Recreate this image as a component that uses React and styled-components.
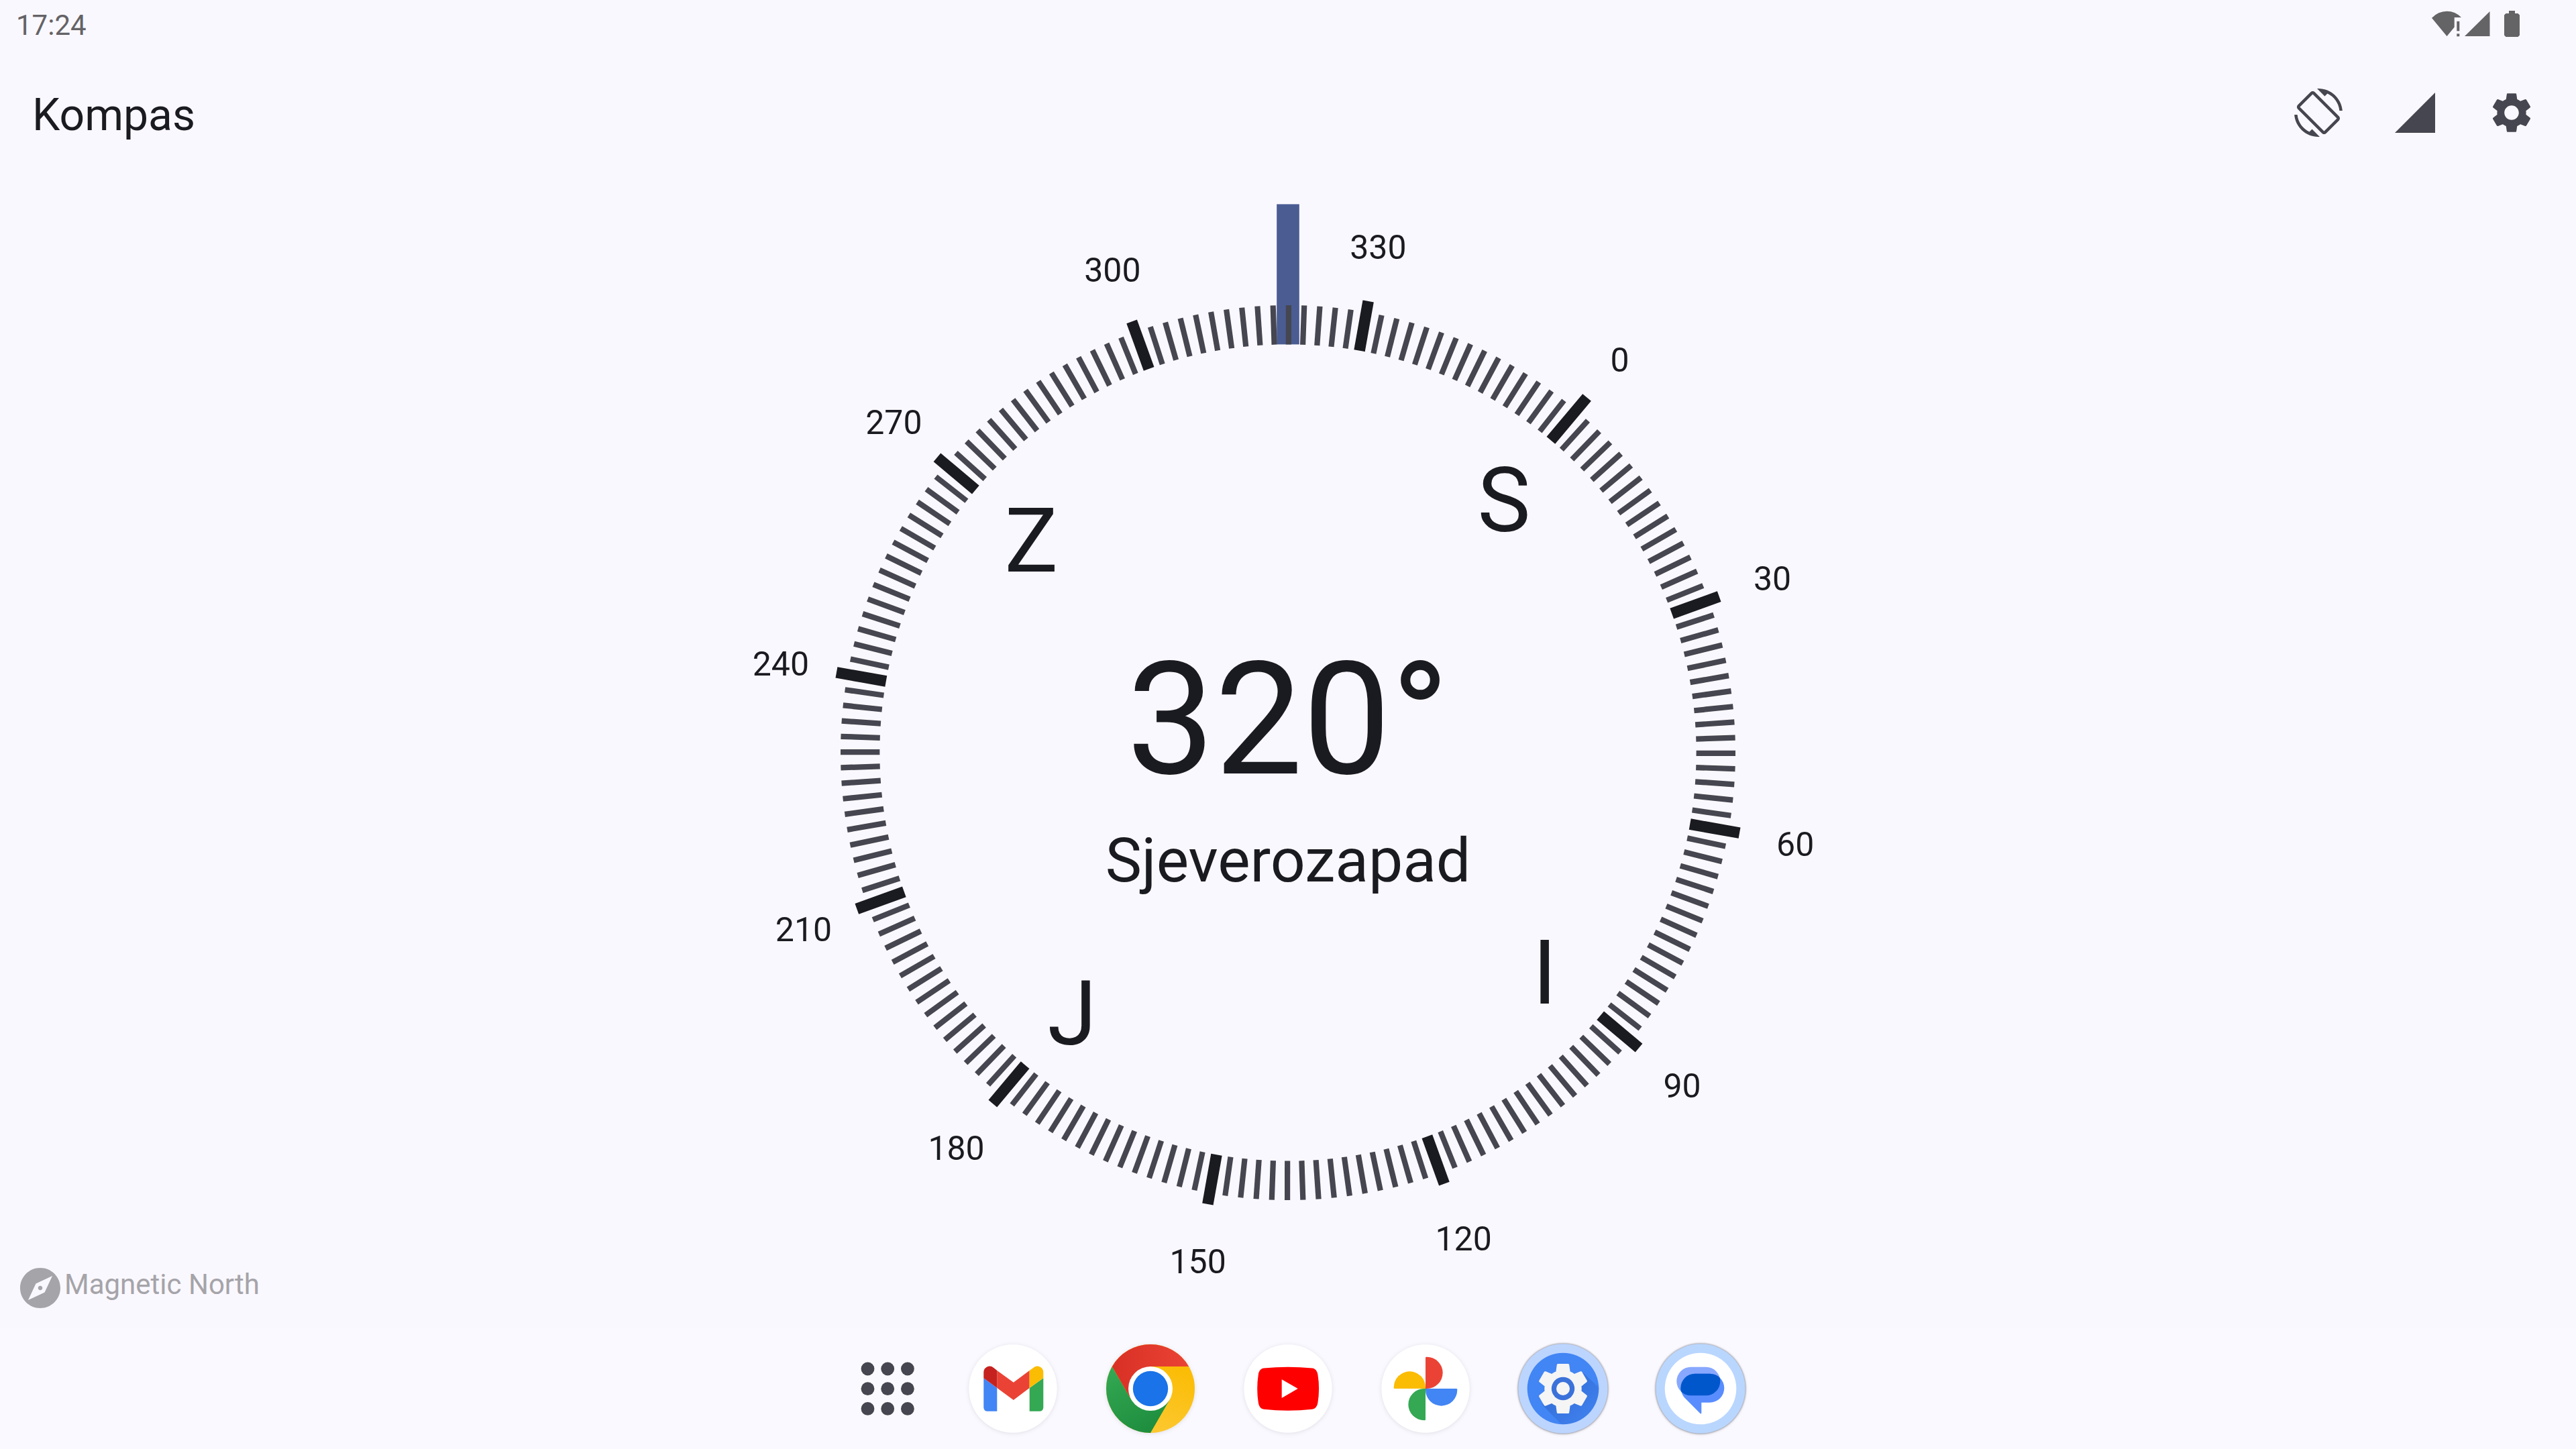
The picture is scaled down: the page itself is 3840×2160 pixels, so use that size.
import React from "react";
import styled, { createGlobalStyle } from "styled-components";

const color = {
  surface: "#faf8ff",
  dock: "#faf9ff",
  ink: "#1a1b20",
  variant: "#45464f",
  primary: "#4a5c92",
  status: "#646366",
  hint: "#a5a4a9",
};

const GlobalStyle = createGlobalStyle`
  body {
    margin: 0;
    background: ${color.surface};
    font-family: Roboto, "Noto Sans", sans-serif;
  }
`;

const Screen = styled.div`
  display: flex;
  flex-direction: column;
  width: 3840px;
  height: 2160px;
  overflow: hidden;
  background: ${color.surface};
  color: ${color.ink};
`;

const StatusBar = styled.header`
  display: flex;
  justify-content: space-between;
  align-items: flex-start;
  height: 72px;
  box-sizing: border-box;
  padding: 14px 80px 0 24px;
  color: ${color.status};
`;

const Clock = styled.span`
  font-size: 42px;
  line-height: 48px;
`;

const Toolbar = styled.div`
  display: flex;
  justify-content: space-between;
  align-items: center;
  height: 192px;
  box-sizing: border-box;
  padding: 0 60px 0 48px;
`;

const Title = styled.h1`
  margin: 0;
  padding-top: 7px;
  font-size: 66px;
  font-weight: 400;
  line-height: 80px;
`;

const Actions = styled.div`
  display: flex;
  gap: 72px;
  color: ${color.variant};
`;

const Glyph = styled.svg`
  display: block;
  width: 72px;
  height: 72px;
  fill: currentColor;
`;

const Stage = styled.main`
  display: grid;
  height: 1716px;
  & > * {
    grid-area: 1 / 1;
  }
`;

const Dial = styled.svg`
  display: block;
  width: 1716px;
  height: 1716px;
  justify-self: center;
`;

const DialText = styled.text`
  font-size: ${(p) => p.$size}px;
  fill: ${color.ink};
  text-anchor: middle;
`;

const Readout = styled.div`
  display: flex;
  flex-direction: column;
  align-items: center;
  align-self: center;
  justify-self: center;
  gap: 36px;
  padding-top: 46px;
`;

const Degrees = styled.div`
  font-size: 233.5px;
  line-height: 240px;
`;

const Direction = styled.div`
  font-size: 91.3px;
  line-height: 108px;
`;

const NorthHint = styled.div`
  display: flex;
  align-items: center;
  align-self: end;
  justify-self: start;
  padding: 0 0 24px 24px;
  color: ${color.hint};
`;

const HintText = styled.span`
  padding-bottom: 10px;
  font-size: 42px;
  line-height: 50px;
`;

const Dock = styled.nav`
  display: flex;
  align-items: center;
  justify-content: flex-start;
  height: 180px;
  box-sizing: border-box;
  padding: 0 0 1px 1283px;
  background: ${color.dock};
`;

const DrawerIcon = styled.svg`
  display: block;
  width: 80px;
  height: 80px;
  margin-right: 80px;
  fill: ${color.variant};
`;

const Apps = styled.div`
  display: flex;
  gap: 71px;
`;

const AppIcon = styled.svg`
  display: block;
  width: 134px;
  height: 134px;
  border-radius: 50%;
  overflow: visible;
  filter: ${(p) =>
    p.$raised
      ? "drop-shadow(0 0 1.5px rgba(0, 0, 0, 0.55)) drop-shadow(0 1px 2px rgba(0, 0, 0, 0.12))"
      : "drop-shadow(0 1px 3px rgba(0, 0, 0, 0.1))"};
`;

const AZIMUTH = 319.92;
const ROSE = [
  ["S", 0],
  ["I", 90],
  ["J", 180],
  ["Z", 270],
];

const polar = (deg, r) => {
  const a = ((deg - AZIMUTH) * Math.PI) / 180;
  return [r * Math.sin(a), -r * Math.cos(a)];
};

const tickEnd = (deg) => {
  if (deg === 0) return 692;
  return deg % 30 === 0 ? 683.6 : 667;
};

function CompassDial() {
  const ticks = Array.from({ length: 180 }, (_, i) => i * 2);
  const labels = ticks.filter((d) => d % 30 === 0);
  return (
    <Dial viewBox="-858 -858 1716 1716">
      <rect x="-16.8" y="-817.6" width="33.6" height="209" fill={color.primary} />
      {ticks.map((d) => {
        const major = d % 30 === 0;
        const [x1, y1] = polar(d, 608.6);
        const [x2, y2] = polar(d, tickEnd(d));
        return (
          <line
            key={d}
            x1={x1}
            y1={y1}
            x2={x2}
            y2={y2}
            stroke={major ? color.ink : color.variant}
            strokeWidth={major ? 16.6 : 8.2}
          />
        );
      })}
      {labels.map((d) => {
        const [x, y] = polar(d, 768);
        return (
          <DialText key={d} $size={50} x={x} y={y + 19.8}>
            {d}
          </DialText>
        );
      })}
      {ROSE.map(([name, d]) => {
        const [x, y] = polar(d, 500);
        return (
          <DialText key={name} $size={133} x={x} y={y + 52.4}>
            {name}
          </DialText>
        );
      })}
    </Dial>
  );
}

const GEAR_OUTER =
  "M19.14,12.94c0.04-0.3,0.06-0.61,0.06-0.94c0-0.32-0.02-0.64-0.07-0.94l2.03-1.58c0.18-0.14,0.23-0.41,0.12-0.61l-1.92-3.32c-0.12-0.22-0.37-0.29-0.59-0.22l-2.39,0.96c-0.5-0.38-1.03-0.7-1.62-0.94L14.4,2.81c-0.04-0.24-0.24-0.41-0.48-0.41h-3.84c-0.24,0-0.43,0.17-0.47,0.41L9.25,5.35C8.66,5.59,8.12,5.92,7.63,6.29L5.24,5.33c-0.22-0.08-0.47,0-0.59,0.22L2.74,8.87C2.62,9.08,2.66,9.34,2.86,9.48l2.03,1.58C4.84,11.36,4.8,11.69,4.8,12s0.02,0.64,0.07,0.94l-2.03,1.58c-0.18,0.14-0.23,0.41-0.12,0.61l1.92,3.32c0.12,0.22,0.37,0.29,0.59,0.22l2.39-0.96c0.5,0.38,1.03,0.7,1.62,0.94l0.36,2.54c0.05,0.24,0.24,0.41,0.48,0.41h3.84c0.24,0,0.44-0.17,0.47-0.41l0.36-2.54c0.59-0.24,1.13-0.56,1.62-0.94l2.39,0.96c0.22,0.08,0.47,0,0.59-0.22l1.92-3.32c0.12-0.22,0.07-0.47-0.12-0.61L19.14,12.94z";
const GEAR_HOLE =
  "M12,15.6c-1.98,0-3.6-1.62-3.6-3.6s1.62-3.6,3.6-3.6s3.6,1.62,3.6,3.6S13.98,15.6,12,15.6z";

const StatusGlyphs = styled.svg`
  display: block;
  width: 138px;
  height: 44px;
  fill: currentColor;
`;

function StatusIcons() {
  return (
    <StatusGlyphs viewBox="3622 14 138 44">
      <path d="M3647.5 54 L3625 26.8 Q3634.5 16.8 3647.5 16.8 Q3660 16.8 3669 26 H3658.7 V40.5 Z" />
      <path d="M3662.3 31.7h4v14.6h-4zM3662.3 50.3h4v4h-4z" />
      <path d="M3674 54H3711.5V17z" />
      <path d="M3740 16h9v4h4.5l2.5 2.5v30l-2.5 2.5h-18l-2.5-2.5v-30l2.5-2.5h4.5z" />
    </StatusGlyphs>
  );
}

const Gmail = () => (
  <AppIcon viewBox="-67 -67 134 134">
    <circle r="65.7" fill="#fff" />
    <path d="M-43.7-15.7L-23.7-1V33.7H-37.7q-6 0-6-6z" fill="#4285f4" />
    <path d="M45.3-15.7L24.7-1V33.7H39.3q6 0 6-6z" fill="#34a853" />
    <path d="M-23.7-27L.8-9.3 24.7-27V-1L.8 17-23.7-1z" fill="#ea4335" />
    <path d="M-43.7-24.3a9 9 0 0 1 14.7-7L-23.7-27V-1L-43.7-15.7z" fill="#c5221f" />
    <path d="M45.3-24.3a9 9 0 0 0-14.7-7L24.7-27V-1L45.3-15.7z" fill="#fbbc04" />
  </AppIcon>
);

const Chrome = () => (
  <AppIcon viewBox="-67 -67 134 134">
    <defs>
      <linearGradient id="cr" x1="0" x2="1">
        <stop offset="0" stopColor="#d93025" />
        <stop offset="1" stopColor="#ea4335" />
      </linearGradient>
      <linearGradient id="cg" x1="0.6" y1="1" x2="0.1" y2="0">
        <stop offset="0" stopColor="#1e8e3e" />
        <stop offset="1" stopColor="#34a853" />
      </linearGradient>
      <linearGradient id="cy" x1="0.4" y1="1" x2="0.7" y2="0.2">
        <stop offset="0" stopColor="#fcc934" />
        <stop offset="1" stopColor="#fbbc04" />
      </linearGradient>
    </defs>
    <circle r="66" fill="url(#cy)" />
    <path d="M-57.16-33A66 66 0 0 0 0 66L28.58 16.5H-28.58z" fill="url(#cg)" />
    <path d="M-57.16-33A66 66 0 0 1 57.16-33H0L-28.58 16.5z" fill="url(#cr)" />
    <circle r="33" fill="#fff" />
    <circle r="26.2" fill="#1a73e8" />
  </AppIcon>
);

const YouTube = () => (
  <AppIcon viewBox="-67 -67 134 134">
    <circle r="65.7" fill="#fff" />
    <path
      d="M-36-30.4Q0-34.2 36-30.4C41-29.8 43.6-26 44.4-21Q47.8 0 44.4 21C43.6 26 41 30 36 30.8Q0 34.6-36 30.8C-41 30-43.4 26-44.2 21Q-47.4 0-44.2-21C-43.4-26-41-29.8-36-30.4z"
      fill="#f00"
    />
    <path d="M-9.3-13.7L14.7.1-9.3 14z" fill="#fff" />
  </AppIcon>
);

const Photos = () => (
  <AppIcon viewBox="-67 -67 134 134">
    <circle r="65.7" fill="#fff" />
    {["#ea4335", "#4285f4", "#34a853", "#fbbc04"].map((c, i) => (
      <path
        key={c}
        d="M0-46q0-1.3 1.3-1.3H2A23.65 23.65 0 0 1 2 0H0z"
        fill={c}
        transform={`rotate(${i * 90})`}
      />
    ))}
  </AppIcon>
);

const SettingsApp = () => (
  <AppIcon $raised viewBox="-67 -67 134 134">
    <defs>
      <linearGradient id="ls" x1="0.3" y1="0.3" x2="0.85" y2="0.85">
        <stop offset="0" stopColor="#1f4fae" stopOpacity="0.35" />
        <stop offset="1" stopColor="#1f4fae" stopOpacity="0" />
      </linearGradient>
      <clipPath id="disc">
        <circle r="53.3" />
      </clipPath>
    </defs>
    <circle r="66.7" fill="#bcd5ff" />
    <circle r="53.3" fill="#4285f4" />
    <path
      clipPath="url(#disc)"
      d="M29.5-24L70 14V70H14L-31 24z"
      fill="url(#ls)"
    />
    <g fill="#f5f5f5">
      <path d={GEAR_OUTER} transform="scale(3.85) translate(-12 -12)" />
      <circle r="17.2" fill="#3b72da" />
      <circle r="10" />
    </g>
  </AppIcon>
);

const Messages = () => (
  <AppIcon $raised viewBox="-67 -67 134 134">
    <defs>
      <clipPath id="bubble">
        <rect x="-35.7" y="-32.3" width="65" height="42.6" rx="21.3" />
      </clipPath>
    </defs>
    <circle r="66.7" fill="#b9d6ff" />
    <circle r="53.3" fill="#fff" />
    <rect x="-35.7" y="-32.3" width="65" height="42.6" rx="21.3" fill="#88a8ff" />
    <path
      d="M-8.2-22.3H13.8a21.5 21.5 0 0 1 0 43H1.3V36.2Q1 38.2-.8 36.8L-23.4 14A21.5 21.5 0 0 1-8.2-22.3z"
      fill="#598dff"
    />
    <rect
      clipPath="url(#bubble)"
      x="-29.7"
      y="-22.3"
      width="65"
      height="43"
      rx="21.5"
      fill="#0057cc"
    />
  </AppIcon>
);

function AllApps() {
  const at = [10.5, 40.2, 69.9];
  return (
    <DrawerIcon viewBox="0 0 80 80">
      {at.map((y) => at.map((x) => <circle key={x + "-" + y} cx={x} cy={y} r="9.9" />))}
    </DrawerIcon>
  );
}

export default function App() {
  return (
    <Screen>
      <GlobalStyle />
      <StatusBar>
        <Clock>17:24</Clock>
        <StatusIcons />
      </StatusBar>
      <Toolbar>
        <Title>Kompas</Title>
        <Actions>
          <Glyph viewBox="0 0 24 24">
            <path d="M16.48 2.52c3.27 1.55 5.61 4.72 5.97 8.48h1.5C23.44 4.84 18.29 0 12 0l-.66.03 3.81 3.81 1.33-1.32zm-6.25-.77c-.59-.59-1.54-.59-2.12 0L1.75 8.11c-.59.59-.59 1.54 0 2.12l12.02 12.02c.59.59 1.54.59 2.12 0l6.36-6.36c.59-.59.59-1.54 0-2.12L10.23 1.75zm4.6 19.44L2.81 9.17l6.36-6.36 12.02 12.02-6.36 6.36zm-7.31.29C4.25 19.94 1.91 16.76 1.55 13H.05C.56 19.16 5.71 24 12 24l.66-.03-3.81-3.81-1.33 1.32z" />
          </Glyph>
          <Glyph viewBox="0 0 24 24">
            <path d="M2 22h20V2z" />
          </Glyph>
          <Glyph viewBox="0 0 24 24">
            <path d={GEAR_OUTER + GEAR_HOLE} />
          </Glyph>
        </Actions>
      </Toolbar>
      <Stage>
        <CompassDial />
        <Readout>
          <Degrees>320°</Degrees>
          <Direction>Sjeverozapad</Direction>
        </Readout>
        <NorthHint>
          <Glyph viewBox="0 0 24 24">
            <path d="M12 10.9c-.61 0-1.1.49-1.1 1.1s.49 1.1 1.1 1.1c.61 0 1.1-.49 1.1-1.1s-.49-1.1-1.1-1.1zM12 2C6.48 2 2 6.48 2 12s4.48 10 10 10 10-4.48 10-10S17.52 2 12 2zm2.19 12.19L6 18l3.81-8.19L18 6l-3.81 8.19z" />
          </Glyph>
          <HintText>Magnetic North</HintText>
        </NorthHint>
      </Stage>
      <Dock>
        <AllApps />
        <Apps>
          <Gmail />
          <Chrome />
          <YouTube />
          <Photos />
          <SettingsApp />
          <Messages />
        </Apps>
      </Dock>
    </Screen>
  );
}
